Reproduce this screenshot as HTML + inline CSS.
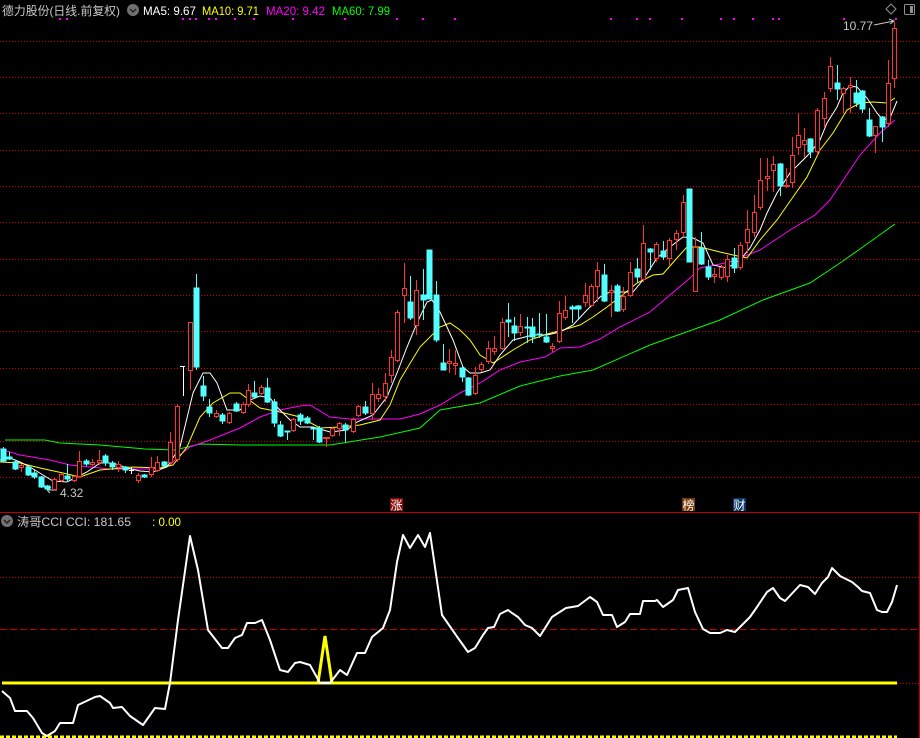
<!DOCTYPE html>
<html><head><meta charset="utf-8">
<style>
html,body{margin:0;padding:0;background:#000;width:920px;height:738px;overflow:hidden}
svg{display:block}
text{font-family:"Liberation Sans","Noto Sans CJK SC",sans-serif}
</style></head><body>
<svg width="920" height="738" viewBox="0 0 920 738" xmlns="http://www.w3.org/2000/svg">
<rect width="920" height="738" fill="#000"/>
<g stroke="#d00000" stroke-width="1" stroke-dasharray="1 2" shape-rendering="crispEdges">
<line x1="0" y1="41.5" x2="920" y2="41.5"/><line x1="0" y1="77.5" x2="920" y2="77.5"/>
<line x1="0" y1="113.5" x2="920" y2="113.5"/><line x1="0" y1="150.5" x2="920" y2="150.5"/>
<line x1="0" y1="186.5" x2="920" y2="186.5"/><line x1="0" y1="222.5" x2="920" y2="222.5"/>
<line x1="0" y1="259.5" x2="920" y2="259.5"/><line x1="0" y1="295.5" x2="920" y2="295.5"/>
<line x1="0" y1="331.5" x2="920" y2="331.5"/><line x1="0" y1="368.5" x2="920" y2="368.5"/>
<line x1="0" y1="404.5" x2="920" y2="404.5"/><line x1="0" y1="441.5" x2="920" y2="441.5"/>
<line x1="0" y1="477.5" x2="920" y2="477.5"/>
<line x1="0" y1="577.5" x2="920" y2="577.5"/>
<line x1="897" y1="683.5" x2="920" y2="683.5"/>
</g>
<line x1="0" y1="629.5" x2="920" y2="629.5" stroke="#c00000" stroke-dasharray="7 3" shape-rendering="crispEdges"/>
<line x1="0" y1="512.5" x2="920" y2="512.5" stroke="#c00000" shape-rendering="crispEdges"/>
<line x1="919.5" y1="513" x2="919.5" y2="738" stroke="#c00000" shape-rendering="crispEdges"/>

<text x="2" y="15" font-size="12" fill="#c8c8c8" textLength="118" lengthAdjust="spacingAndGlyphs">德力股份(日线.前复权)</text>
<circle cx="133" cy="10" r="6" fill="#707070"/>
<path d="M130 9 L133 12 L136 9" stroke="#222" stroke-width="1.5" fill="none"/>
<text x="143" y="15" font-size="12" fill="#ffffff" textLength="53" lengthAdjust="spacingAndGlyphs">MA5: 9.67</text>
<text x="202" y="15" font-size="12" fill="#ffff00" textLength="57" lengthAdjust="spacingAndGlyphs">MA10: 9.71</text>
<text x="266" y="15" font-size="12" fill="#ff00ff" textLength="59" lengthAdjust="spacingAndGlyphs">MA20: 9.42</text>
<text x="332" y="15" font-size="12" fill="#00ff00" textLength="58" lengthAdjust="spacingAndGlyphs">MA60: 7.99</text>
<g fill="#ff00ff">
<rect x="59" y="18" width="2" height="2"/><rect x="66" y="18" width="2" height="2"/><rect x="182" y="18" width="2" height="2"/><rect x="189" y="18" width="2" height="2"/><rect x="195" y="18" width="2" height="2"/><rect x="208" y="18" width="2" height="2"/><rect x="215" y="18" width="2" height="2"/><rect x="234" y="18" width="2" height="2"/><rect x="253" y="18" width="2" height="2"/><rect x="292" y="18" width="2" height="2"/><rect x="344" y="18" width="2" height="2"/><rect x="396" y="18" width="2" height="2"/><rect x="422" y="18" width="2" height="2"/><rect x="454" y="18" width="2" height="2"/><rect x="610" y="18" width="2" height="2"/><rect x="636" y="18" width="2" height="2"/><rect x="649" y="18" width="2" height="2"/><rect x="681" y="18" width="2" height="2"/><rect x="720" y="18" width="2" height="2"/><rect x="733" y="18" width="2" height="2"/><rect x="752" y="18" width="2" height="2"/><rect x="772" y="18" width="2" height="2"/><rect x="778" y="18" width="2" height="2"/><rect x="843" y="18" width="2" height="2"/><rect x="895" y="18" width="2" height="2"/>
</g>
<path d="M891 4 L896 9 L891 14 L886 9 Z" stroke="#909090" fill="none"/>
<rect x="904.5" y="4.5" width="10" height="10" rx="1" stroke="#909090" fill="none"/>
<rect x="910" y="6" width="3" height="7" fill="#909090"/>
<text x="843" y="30" font-size="12" fill="#c8c8c8">10.77</text>
<path d="M874 25 L894 21 M889 19 L894 21 L890 24" stroke="#c8c8c8" fill="none"/>
<text x="60" y="497" font-size="12" fill="#c8c8c8">4.32</text>
<path d="M47 490 L57 490 M47 490 L51 487 M47 490 L50 493" stroke="#c8c8c8" fill="none"/>

<polyline fill="none" stroke="#00ff00" stroke-width="1" points="5,440 45,440 60,443 100,445 145,449 175,450 200,444 240,445 330,445 380,437 420,428 440,410 480,403 520,386 560,376 593,370 650,345 720,320 763,300 810,283 840,263 860,249 895,224"/>
<polyline fill="none" stroke="#ff00ff" stroke-width="1" points="0,449 20,455 50,460 70,465 90,467 110,469 160,469 170,465 180,455 190,447 210,440 240,428 260,417 280,410 300,406 310,405 330,417 350,419 400,419 420,414 440,405 460,393 480,383 500,370 520,362 545,357 560,348 580,347 600,339 620,327 650,312 670,295 690,278 700,268 730,262 760,250 790,230 815,215 830,200 860,155 880,133 895,120"/>
<polyline fill="none" stroke="#ffff00" stroke-width="1" points="0,462 20,463 40,468 63,473 80,477 100,470 133,467 160,468 173,465 187,447 200,417 213,403 230,393 240,393 260,408 280,412 300,417 320,428 340,427 360,425 380,420 390,405 400,380 420,347 440,327 450,323 460,330 470,340 480,355 493,363 513,350 530,340 547,334 563,330 580,325 593,317 607,307 620,297 637,283 653,275 663,274 677,258 687,247 700,247 720,252 733,255 747,258 760,240 777,220 793,197 807,177 820,150 833,133 847,110 860,103 873,102 887,103 895,98"/>
<polyline fill="none" stroke="#ffffff" stroke-width="1" points="0,460 10,458 20,462 30,467 43,475 53,481 67,482 77,477 87,472 100,463 113,463 127,468 140,471 153,472 167,467 180,447 193,393 203,373 210,373 217,383 227,410 240,410 250,400 260,396 270,398 277,407 290,420 300,427 313,427 330,432 347,430 357,422 373,415 387,397 397,373 407,347 417,323 427,302 432,300 440,312 453,340 463,367 470,373 480,373 490,370 500,355 513,340 533,335 547,335 560,332 573,325 587,310 600,297 610,292 633,292 643,280 657,258 670,247 683,237 693,238 703,243 713,265 727,268 740,260 750,248 760,230 767,213 777,193 790,173 800,163 810,153 820,140 827,123 837,107 843,93 850,86 857,87 867,98 877,113 883,120 890,118 897,101"/>

<g shape-rendering="crispEdges">
<g stroke="#54ffff" fill="#54ffff">
<line x1="3.5" y1="447" x2="3.5" y2="462"/><rect x="1" y="449" width="5" height="12"/>
<line x1="9.5" y1="452" x2="9.5" y2="460"/><rect x="7" y="457" width="5" height="2"/>
<line x1="15.5" y1="460" x2="15.5" y2="470"/><rect x="13" y="462" width="5" height="7"/>
<line x1="28.5" y1="466" x2="28.5" y2="476"/><rect x="26" y="467" width="5" height="8"/>
<line x1="34.5" y1="470" x2="34.5" y2="479"/><rect x="32" y="473" width="5" height="4"/>
<line x1="41.5" y1="476" x2="41.5" y2="488"/><rect x="39" y="477" width="5" height="10"/>
<line x1="47.5" y1="485" x2="47.5" y2="490"/><rect x="45" y="486" width="5" height="3"/>
<line x1="67.5" y1="464" x2="67.5" y2="482"/><rect x="65" y="476" width="5" height="3"/>
<line x1="86.5" y1="459" x2="86.5" y2="466"/><rect x="84" y="461" width="5" height="3"/>
<line x1="105.5" y1="454" x2="105.5" y2="466"/><rect x="103" y="456" width="5" height="7"/>
<line x1="112.5" y1="461" x2="112.5" y2="470"/><rect x="110" y="463" width="5" height="4"/>
<line x1="125.5" y1="466" x2="125.5" y2="473"/><rect x="123" y="467" width="5" height="3"/>
<line x1="144.5" y1="474" x2="144.5" y2="478"/><rect x="142" y="475" width="5" height="2"/>
<line x1="164.5" y1="461" x2="164.5" y2="467"/><rect x="162" y="462" width="5" height="4"/>
<line x1="196.5" y1="274" x2="196.5" y2="370"/><rect x="194" y="288" width="5" height="79"/>
<line x1="203.5" y1="376" x2="203.5" y2="401"/><rect x="201" y="386" width="5" height="10"/>
<line x1="209.5" y1="399" x2="209.5" y2="417"/><rect x="207" y="407" width="5" height="6"/>
<line x1="222.5" y1="413" x2="222.5" y2="424"/><rect x="220" y="415" width="5" height="6"/>
<line x1="236.5" y1="402" x2="236.5" y2="412"/><rect x="234" y="404" width="5" height="7"/>
<line x1="254.5" y1="381" x2="254.5" y2="398"/><rect x="252" y="393" width="5" height="4"/>
<line x1="267.5" y1="378" x2="267.5" y2="403"/><rect x="265" y="388" width="5" height="14"/>
<line x1="274.5" y1="399" x2="274.5" y2="427"/><rect x="272" y="402" width="5" height="21"/>
<line x1="280.5" y1="421" x2="280.5" y2="437"/><rect x="278" y="425" width="5" height="11"/>
<line x1="287.5" y1="431" x2="287.5" y2="440"/><rect x="285" y="431" width="5" height="1"/>
<line x1="300.5" y1="413" x2="300.5" y2="425"/><rect x="298" y="415" width="5" height="6"/>
<line x1="307.5" y1="416" x2="307.5" y2="424"/><rect x="305" y="418" width="5" height="5"/>
<line x1="313.5" y1="428" x2="313.5" y2="440"/><rect x="311" y="428" width="5" height="1"/>
<line x1="319.5" y1="426" x2="319.5" y2="443"/><rect x="317" y="428" width="5" height="14"/>
<line x1="345.5" y1="423" x2="345.5" y2="442"/><rect x="343" y="425" width="5" height="5"/>
<line x1="365.5" y1="401" x2="365.5" y2="415"/><rect x="363" y="407" width="5" height="6"/>
<line x1="410.5" y1="276" x2="410.5" y2="320"/><rect x="408" y="302" width="5" height="16"/>
<line x1="423.5" y1="269" x2="423.5" y2="320"/><rect x="421" y="295" width="5" height="5"/>
<rect x="427" y="250" width="5" height="49"/>
<line x1="436.5" y1="281" x2="436.5" y2="342"/><rect x="434" y="295" width="5" height="45"/>
<line x1="443.5" y1="344" x2="443.5" y2="370"/><rect x="441" y="363" width="5" height="7"/>
<line x1="462.5" y1="366" x2="462.5" y2="382"/><rect x="460" y="368" width="5" height="9"/>
<line x1="468.5" y1="377" x2="468.5" y2="396"/><rect x="466" y="378" width="5" height="17"/>
<line x1="508.5" y1="303" x2="508.5" y2="337"/><rect x="506" y="320" width="5" height="2"/>
<line x1="514.5" y1="317" x2="514.5" y2="341"/><rect x="512" y="326" width="5" height="7"/>
<line x1="527.5" y1="317" x2="527.5" y2="343"/><rect x="525" y="327" width="5" height="1"/>
<line x1="532.5" y1="318" x2="532.5" y2="343"/><rect x="530" y="327" width="5" height="10"/>
<line x1="539.5" y1="313" x2="539.5" y2="338"/><rect x="537" y="334" width="5" height="1"/>
<line x1="546.5" y1="314" x2="546.5" y2="343"/><rect x="544" y="337" width="5" height="5"/>
<line x1="572.5" y1="305" x2="572.5" y2="323"/><rect x="570" y="307" width="5" height="2"/>
<line x1="578.5" y1="305" x2="578.5" y2="320"/><rect x="576" y="306" width="5" height="3"/>
<line x1="604.5" y1="264" x2="604.5" y2="302"/><rect x="602" y="275" width="5" height="26"/>
<line x1="617.5" y1="284" x2="617.5" y2="312"/><rect x="615" y="286" width="5" height="25"/>
<line x1="637.5" y1="258" x2="637.5" y2="283"/><rect x="635" y="269" width="5" height="8"/>
<line x1="650.5" y1="248" x2="650.5" y2="270"/><rect x="648" y="249" width="5" height="3"/>
<line x1="663.5" y1="241" x2="663.5" y2="260"/><rect x="661" y="251" width="5" height="6"/>
<rect x="687" y="189" width="5" height="73"/>
<line x1="701.5" y1="232" x2="701.5" y2="265"/><rect x="699" y="248" width="5" height="16"/>
<line x1="708.5" y1="260" x2="708.5" y2="280"/><rect x="706" y="267" width="5" height="10"/>
<line x1="734.5" y1="248" x2="734.5" y2="273"/><rect x="732" y="258" width="5" height="10"/>
<line x1="780.5" y1="163" x2="780.5" y2="196"/><rect x="778" y="164" width="5" height="22"/>
<line x1="810.5" y1="138" x2="810.5" y2="158"/><rect x="808" y="139" width="5" height="13"/>
<line x1="837.5" y1="65" x2="837.5" y2="100"/><rect x="835" y="83" width="5" height="6"/>
<line x1="856.5" y1="80" x2="856.5" y2="107"/><rect x="854" y="93" width="5" height="10"/>
<line x1="862.5" y1="90" x2="862.5" y2="113"/><rect x="860" y="91" width="5" height="18"/>
<line x1="869.5" y1="108" x2="869.5" y2="137"/><rect x="867" y="120" width="5" height="16"/>
<line x1="882.5" y1="116" x2="882.5" y2="142"/><rect x="880" y="117" width="5" height="10"/>
</g>
<g stroke="#ff3232" fill="#000">
<line x1="21.5" y1="464" x2="21.5" y2="472"/><rect x="19.5" y="465.5" width="4" height="2"/>
<line x1="54.5" y1="478" x2="54.5" y2="490"/><rect x="52.5" y="479.5" width="4" height="10"/>
<line x1="61.5" y1="473" x2="61.5" y2="482"/><rect x="59.5" y="474.5" width="4" height="6"/>
<line x1="74.5" y1="475" x2="74.5" y2="482"/><rect x="72.5" y="476.5" width="4" height="4"/>
<line x1="79.5" y1="451" x2="79.5" y2="477"/><rect x="77.5" y="461.5" width="4" height="15"/>
<line x1="92.5" y1="459" x2="92.5" y2="466"/><rect x="90.5" y="462.5" width="4" height="2"/>
<line x1="99.5" y1="450" x2="99.5" y2="465"/><rect x="97.5" y="460.5" width="4" height="2"/>
<line x1="118.5" y1="461" x2="118.5" y2="472"/><rect x="116.5" y="464.5" width="4" height="3"/>
<line x1="138.5" y1="473" x2="138.5" y2="483"/><rect x="136.5" y="475.5" width="4" height="5"/>
<line x1="151.5" y1="457" x2="151.5" y2="477"/><rect x="149.5" y="467.5" width="4" height="7"/>
<line x1="157.5" y1="456" x2="157.5" y2="472"/><rect x="155.5" y="462.5" width="4" height="8"/>
<line x1="170.5" y1="432" x2="170.5" y2="465"/><rect x="168.5" y="442.5" width="4" height="20"/>
<line x1="177.5" y1="404" x2="177.5" y2="462"/><rect x="175.5" y="406.5" width="4" height="53"/>
<line x1="190.5" y1="322" x2="190.5" y2="390"/><rect x="188.5" y="322.5" width="4" height="48"/>
<line x1="216.5" y1="410" x2="216.5" y2="418"/><rect x="214.5" y="413.5" width="4" height="3"/>
<line x1="229.5" y1="412" x2="229.5" y2="424"/><rect x="227.5" y="413.5" width="4" height="9"/>
<line x1="243.5" y1="402" x2="243.5" y2="414"/><rect x="241.5" y="404.5" width="4" height="8"/>
<line x1="248.5" y1="384" x2="248.5" y2="407"/><rect x="246.5" y="390.5" width="4" height="14"/>
<line x1="261.5" y1="385" x2="261.5" y2="395"/><rect x="259.5" y="387.5" width="4" height="6"/>
<line x1="293.5" y1="418" x2="293.5" y2="432"/><rect x="291.5" y="419.5" width="4" height="11"/>
<line x1="326.5" y1="437" x2="326.5" y2="447"/><rect x="323.5" y="437.5" width="6" height="1"/>
<line x1="332.5" y1="427" x2="332.5" y2="437"/><rect x="330.5" y="428.5" width="4" height="7"/>
<line x1="339.5" y1="422" x2="339.5" y2="436"/><rect x="337.5" y="423.5" width="4" height="5"/>
<line x1="353.5" y1="418" x2="353.5" y2="433"/><rect x="351.5" y="419.5" width="4" height="12"/>
<line x1="358.5" y1="405" x2="358.5" y2="417"/><rect x="356.5" y="406.5" width="4" height="9"/>
<line x1="372.5" y1="383" x2="372.5" y2="420"/><rect x="370.5" y="394.5" width="4" height="19"/>
<line x1="378.5" y1="388" x2="378.5" y2="402"/><rect x="376.5" y="394.5" width="4" height="4"/>
<line x1="385.5" y1="373" x2="385.5" y2="402"/><rect x="383.5" y="383.5" width="4" height="13"/>
<line x1="391.5" y1="350" x2="391.5" y2="383"/><rect x="389.5" y="357.5" width="4" height="18"/>
<line x1="397.5" y1="310" x2="397.5" y2="362"/><rect x="395.5" y="312.5" width="4" height="48"/>
<line x1="404.5" y1="263" x2="404.5" y2="323"/><rect x="402.5" y="288.5" width="4" height="7"/>
<line x1="416.5" y1="280" x2="416.5" y2="335"/><rect x="414.5" y="290.5" width="4" height="35"/>
<line x1="449.5" y1="349" x2="449.5" y2="373"/><rect x="447.5" y="361.5" width="4" height="2"/>
<line x1="455.5" y1="350" x2="455.5" y2="375"/><rect x="453.5" y="363.5" width="4" height="2"/>
<line x1="475.5" y1="367" x2="475.5" y2="395"/><rect x="473.5" y="375.5" width="4" height="18"/>
<line x1="481.5" y1="362" x2="481.5" y2="372"/><rect x="479.5" y="364.5" width="4" height="5"/>
<line x1="488.5" y1="341" x2="488.5" y2="364"/><rect x="486.5" y="348.5" width="4" height="13"/>
<line x1="494.5" y1="336" x2="494.5" y2="355"/><rect x="492.5" y="348.5" width="4" height="3"/>
<line x1="502.5" y1="318" x2="502.5" y2="350"/><rect x="500.5" y="322.5" width="4" height="26"/>
<line x1="520.5" y1="314" x2="520.5" y2="336"/><rect x="518.5" y="326.5" width="4" height="6"/>
<line x1="552.5" y1="343" x2="552.5" y2="352"/><rect x="550.5" y="346.5" width="4" height="2"/>
<line x1="559.5" y1="301" x2="559.5" y2="343"/><rect x="557.5" y="313.5" width="4" height="28"/>
<line x1="565.5" y1="296" x2="565.5" y2="320"/><rect x="563.5" y="310.5" width="4" height="7"/>
<line x1="585.5" y1="283" x2="585.5" y2="307"/><rect x="583.5" y="295.5" width="4" height="7"/>
<line x1="591.5" y1="284" x2="591.5" y2="307"/><rect x="589.5" y="286.5" width="4" height="19"/>
<line x1="597.5" y1="262" x2="597.5" y2="302"/><rect x="595.5" y="270.5" width="4" height="16"/>
<line x1="611.5" y1="285" x2="611.5" y2="317"/><rect x="609.5" y="290.5" width="4" height="2"/>
<line x1="623.5" y1="287" x2="623.5" y2="312"/><rect x="621.5" y="296.5" width="4" height="13"/>
<line x1="630.5" y1="262" x2="630.5" y2="297"/><rect x="628.5" y="272.5" width="4" height="23"/>
<line x1="643.5" y1="225" x2="643.5" y2="282"/><rect x="641.5" y="243.5" width="4" height="36"/>
<line x1="656.5" y1="242" x2="656.5" y2="262"/><rect x="654.5" y="244.5" width="4" height="14"/>
<line x1="669.5" y1="238" x2="669.5" y2="265"/><rect x="667.5" y="240.5" width="4" height="18"/>
<line x1="676.5" y1="230" x2="676.5" y2="250"/><rect x="674.5" y="233.5" width="4" height="6"/>
<line x1="683.5" y1="195" x2="683.5" y2="237"/><rect x="681.5" y="202.5" width="4" height="30"/>
<line x1="695.5" y1="237" x2="695.5" y2="292"/><rect x="693.5" y="247.5" width="4" height="44"/>
<line x1="714.5" y1="268" x2="714.5" y2="283"/><rect x="712.5" y="274.5" width="4" height="2"/>
<line x1="721.5" y1="265" x2="721.5" y2="280"/><rect x="719.5" y="267.5" width="4" height="10"/>
<line x1="727.5" y1="255" x2="727.5" y2="282"/><rect x="725.5" y="259.5" width="4" height="17"/>
<line x1="740.5" y1="242" x2="740.5" y2="270"/><rect x="738.5" y="245.5" width="4" height="22"/>
<line x1="747.5" y1="210" x2="747.5" y2="253"/><rect x="745.5" y="229.5" width="4" height="13"/>
<line x1="754.5" y1="195" x2="754.5" y2="237"/><rect x="752.5" y="212.5" width="4" height="20"/>
<line x1="760.5" y1="158" x2="760.5" y2="210"/><rect x="758.5" y="180.5" width="4" height="27"/>
<line x1="767.5" y1="158" x2="767.5" y2="191"/><rect x="765.5" y="176.5" width="4" height="2"/>
<line x1="773.5" y1="156" x2="773.5" y2="192"/><rect x="771.5" y="164.5" width="4" height="6"/>
<line x1="786.5" y1="168" x2="786.5" y2="188"/><rect x="783.5" y="185.5" width="6" height="1"/>
<line x1="792.5" y1="137" x2="792.5" y2="188"/><rect x="790.5" y="155.5" width="4" height="27"/>
<line x1="798.5" y1="113" x2="798.5" y2="155"/><rect x="796.5" y="135.5" width="4" height="12"/>
<line x1="804.5" y1="128" x2="804.5" y2="158"/><rect x="802.5" y="140.5" width="4" height="4"/>
<line x1="817.5" y1="108" x2="817.5" y2="155"/><rect x="815.5" y="110.5" width="4" height="41"/>
<line x1="824.5" y1="92" x2="824.5" y2="128"/><rect x="822.5" y="98.5" width="4" height="20"/>
<line x1="830.5" y1="57" x2="830.5" y2="92"/><rect x="828.5" y="66.5" width="4" height="22"/>
<line x1="843.5" y1="87" x2="843.5" y2="113"/><rect x="841.5" y="88.5" width="4" height="5"/>
<line x1="850.5" y1="77" x2="850.5" y2="113"/><rect x="848.5" y="85.5" width="4" height="2"/>
<line x1="875.5" y1="126" x2="875.5" y2="153"/><rect x="873.5" y="126.5" width="4" height="9"/>
<line x1="888.5" y1="60" x2="888.5" y2="127"/><rect x="886.5" y="83.5" width="4" height="40"/>
<line x1="894.5" y1="22" x2="894.5" y2="88"/><rect x="892.5" y="28.5" width="4" height="50"/>
</g>
<g stroke="#ffffff">
<line x1="129" y1="470.5" x2="134" y2="470.5"/><line x1="131.5" y1="467" x2="131.5" y2="474"/>
<line x1="183.5" y1="366" x2="183.5" y2="396"/><line x1="180" y1="366.5" x2="185" y2="366.5"/>
</g>
</g>

<rect x="390" y="498" width="13" height="13" fill="#8b0a0a"/>
<text x="390.5" y="509.5" font-size="12" fill="#fff">涨</text>
<rect x="682" y="498" width="13" height="13" fill="#7a3a08"/>
<text x="682.5" y="509.5" font-size="12" fill="#fff">榜</text>
<rect x="733" y="498" width="13" height="13" fill="#0a3868"/>
<text x="733.5" y="509.5" font-size="12" fill="#fff">财</text>

<circle cx="7" cy="521" r="6" fill="#707070"/>
<path d="M4 520 L7 523 L10 520" stroke="#222" stroke-width="1.5" fill="none"/>
<text x="17" y="526" font-size="12" fill="#c8c8c8" textLength="114" lengthAdjust="spacingAndGlyphs">涛哥CCI CCI: 181.65</text>
<text x="152" y="526" font-size="12" fill="#ffff00" textLength="29" lengthAdjust="spacingAndGlyphs">: 0.00</text>

<line x1="2" y1="683" x2="897" y2="683" stroke="#ffff00" stroke-width="3"/>
<polyline fill="none" stroke="#ffff00" stroke-width="3" points="318,683 325,636 332,683"/>
<polyline fill="none" stroke="#ffffff" stroke-width="2" stroke-linejoin="round" points="2,691 10,698 15,711 27,711 33,718 42,733 47,736 55,731 60,723 73,723 78,705 95,697 100,696 110,703 113,708 122,707 130,716 143,725 155,708 165,709 170,683 178,620 190,536 198,570 208,630 222,648 228,648 235,638 242,635 247,623 255,623 262,620 270,640 280,670 288,672 295,663 300,662 310,665 320,683 330,683 340,670 347,675 357,653 365,653 372,637 383,628 390,610 397,562 403,535 410,548 418,535 425,547 430,533 442,615 458,638 468,652 475,648 483,635 488,628 494,627 500,614 508,610 512,613 518,617 525,625 532,628 540,636 552,617 566,608 578,606 590,597 597,602 603,615 612,615 617,627 625,622 630,614 640,614 643,601 655,601 657,600 663,607 673,600 678,590 688,588 695,612 703,629 710,633 720,633 727,630 735,632 750,617 757,607 767,592 773,588 780,598 785,601 800,585 808,587 815,594 822,583 828,577 832,568 840,576 852,582 858,587 862,591 870,593 877,610 882,612 887,612 892,602 897,585"/>
<line x1="0" y1="737" x2="897" y2="737" stroke="#ffff00" stroke-width="3" stroke-dasharray="4 2"/>
</svg>
</body></html>
